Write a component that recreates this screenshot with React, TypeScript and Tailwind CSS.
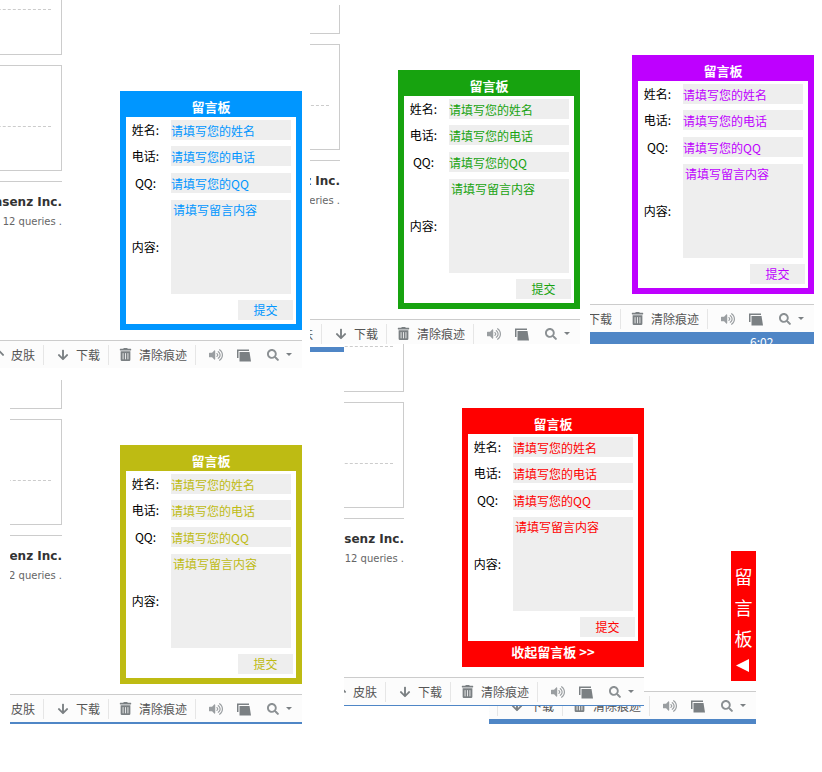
import { FaArrowDown, FaArrowUp, FaSearch, FaTrashAlt, FaVolumeUp } from 'react-icons/fa'

const themes = {
  blue: { bg: 'bg-[#0096ff]', ph: 'placeholder:text-[#0096ff]', text: 'text-[#0096ff]' },
  green: { bg: 'bg-[#17a30f]', ph: 'placeholder:text-[#17a30f]', text: 'text-[#17a30f]' },
  purple: { bg: 'bg-[#be00ff]', ph: 'placeholder:text-[#be00ff]', text: 'text-[#be00ff]' },
  olive: { bg: 'bg-[#bebb13]', ph: 'placeholder:text-[#bebb13]', text: 'text-[#bebb13]' },
  red: { bg: 'bg-[#ff0000]', ph: 'placeholder:text-[#ff0000]', text: 'text-[#ff0000]' },
}

type Theme = (typeof themes)['blue']

function Field({ label, placeholder, theme, className }: { label: string; placeholder: string; theme: Theme; className: string }) {
  return (
    <div className={`flex items-center pl-[4px] ${className}`}>
      <span className="w-[31px] text-center text-[12px] leading-none text-black">{label}</span>
      <input
        readOnly
        placeholder={placeholder}
        className={`ml-[10px] h-[20px] w-[120px] bg-[#eeeeee] p-0 text-[12px] outline-none ${theme.ph}`}
      />
    </div>
  )
}

function MessageCard({ theme, className, collapse }: { theme: Theme; className: string; collapse?: boolean }) {
  return (
    <div className={`absolute z-10 flex w-[182px] flex-col px-[6px] ${theme.bg} ${className}`}>
      <h3 className="flex h-[26px] items-end justify-center pb-[1px] text-[13px] leading-[18px] font-bold text-white">留言板</h3>
      <div className="flex h-[207px] flex-col bg-white pt-[3px]">
        <Field label="姓名:" placeholder="请填写您的姓名" theme={theme} className="" />
        <Field label="电话:" placeholder="请填写您的电话" theme={theme} className="mt-[6px]" />
        <Field label="QQ:" placeholder="请填写您的QQ" theme={theme} className="mt-[7px]" />
        <div className="mt-[7px] flex items-center pl-[4px]">
          <span className="w-[31px] text-center text-[12px] leading-none text-black">内容:</span>
          <textarea
            readOnly
            placeholder="请填写留言内容"
            className={`ml-[10px] h-[94px] w-[120px] resize-none bg-[#eeeeee] px-[2px] py-[1px] text-[12px] leading-[18px] outline-none ${theme.ph}`}
          />
        </div>
        <div className="mt-[6px] flex justify-end pr-[3px]">
          <button className={`h-[20px] w-[55px] bg-[#eeeeee] text-[12px] leading-none ${theme.text}`}>提交</button>
        </div>
      </div>
      {collapse ? (
        <div className="flex h-[26px] items-start justify-center pt-[1px] text-[13px] leading-[20px] font-bold whitespace-pre text-white">收起留言板 {'>>'}</div>
      ) : (
        <div className="h-[6px]" />
      )}
    </div>
  )
}

// bit of the forum page left behind the card in each capture
function PageScrap({ className }: { className: string }) {
  return (
    <div className={`absolute flex flex-col items-end justify-end overflow-hidden bg-white font-['DejaVu_Sans',sans-serif] ${className}`}>
      <div className="flex h-[100px] w-[400px] shrink-0 flex-col items-end justify-end border-r border-b border-[#cccccc] pb-[44px]">
        <div className="mr-[10px] w-[380px] border-t border-dashed border-[#cccccc]" />
      </div>
      <div className="mt-[10px] h-[106px] w-[400px] shrink-0 border border-[#cccccc] pt-[60px]">
        <div className="ml-auto mr-[10px] w-[380px] border-t border-dashed border-[#cccccc]" />
      </div>
      <div className="mt-[10px] h-px w-[400px] shrink-0 bg-[#cccccc]" />
      <div className="mt-[13px] h-[14px] shrink-0 text-[12px] leading-[14px] font-bold whitespace-nowrap text-[#333333]">Comsenz Inc.</div>
      <div className="mt-[6px] h-[14px] shrink-0 text-[10px] leading-[14px] whitespace-nowrap text-[#666666]">second(s), 12 queries .</div>
    </div>
  )
}

function WindowsIcon() {
  return (
    <svg width="15" height="14" viewBox="0 0 15 14" fill="#7b8083" className="shrink-0">
      <path d="M0 1.5 h12 v1.5 H1.5 V10 H0 Z" />
      <path d="M2.5 4 h10 l1.5 9.5 H2.5 Z" />
    </svg>
  )
}

function Sep({ className }: { className: string }) {
  return <span className={`h-[20px] w-px shrink-0 bg-[#e6e6e6] ${className}`} />
}

function Toolbar({ className, rowClass, children }: { className: string; rowClass: string; children?: React.ReactNode }) {
  return (
    <div className={`absolute overflow-hidden border-t border-[#cccccc] bg-[#fcfcfc] ${className}`}>
      <div className={`flex h-[27px] w-max items-center text-[12px] text-[#555555] ${rowClass}`}>
        <FaArrowUp size={12} color="#7b8083" className="shrink-0" />
        <span className="ml-[6px] w-[24px] shrink-0">皮肤</span>
        <Sep className="ml-[8px]" />
        <FaArrowDown size={12} color="#7b8083" className="ml-[13px] shrink-0" />
        <span className="ml-[7px] w-[24px] shrink-0">下载</span>
        <Sep className="ml-[8px]" />
        <FaTrashAlt size={13} color="#7b8083" className="ml-[10px] shrink-0" />
        <span className="ml-[7px] w-[48px] shrink-0">清除痕迹</span>
        <Sep className="ml-[8px]" />
        <FaVolumeUp size={14} color="#9a9ea1" className="ml-[13px] shrink-0" />
        <span className="ml-[14px] shrink-0">
          <WindowsIcon />
        </span>
        <FaSearch size={12} color="#8b9093" className="ml-[15px] shrink-0" />
        <span className="ml-[7px] h-0 w-0 shrink-0 border-x-[3px] border-t-[3px] border-x-transparent border-t-[#7b8083]" />
      </div>
      {children}
    </div>
  )
}

export default function App() {
  return (
    <div className="relative h-[772px] w-[822px] overflow-hidden bg-white font-['Noto_Sans_CJK_SC','Liberation_Sans',sans-serif]">
      <PageScrap className="top-0 left-0 h-[229px] w-[62px]" />
      <PageScrap className="top-[5px] left-[310px] h-[203px] w-[30px]" />
      <PageScrap className="top-[380px] left-[10px] h-[203px] w-[52px]" />
      <PageScrap className="top-[344px] left-[344px] h-[222px] w-[60px]" />

      <Toolbar className="top-[340px] left-0 h-[28px] w-[302px]" rowClass="ml-[-7px]" />
      <Toolbar className="top-[319px] left-[310px] h-[25px] w-[270px]" rowClass="ml-[-39px]" />
      <div className="absolute top-[347px] left-[310px] h-[5px] w-[34px] bg-[#4f86c6]" />
      <Toolbar className="top-[304px] left-[590px] h-[40px] w-[224px]" rowClass="ml-[-85px]">
        <div className="h-[12px] overflow-hidden bg-[#4f86c6] pl-[160px] text-[12px] leading-[20px] text-white">6:02</div>
      </Toolbar>
      <Toolbar className="top-[694px] left-[10px] h-[30px] w-[292px]" rowClass="ml-[-17px]">
        <div className="h-[2px] bg-[#4f86c6]" />
      </Toolbar>
      <Toolbar className="top-[691px] left-[489px] h-[33px] w-[267px]" rowClass="ml-[-42px]">
        <div className="h-[5px] bg-[#4f86c6]" />
      </Toolbar>
      <Toolbar className="top-[677px] left-[344px] h-[29px] w-[300px]" rowClass="ml-[-9px]">
        <div className="h-px bg-[#4f86c6]" />
      </Toolbar>

      <MessageCard theme={themes.blue} className="top-[91px] left-[120px]" />
      <MessageCard theme={themes.green} className="top-[70px] left-[398px]" />
      <MessageCard theme={themes.purple} className="top-[55px] left-[632px]" />
      <MessageCard theme={themes.olive} className="top-[445px] left-[120px]" />
      <MessageCard theme={themes.red} className="top-[408px] left-[462px]" collapse />

      <div className="absolute top-[551px] left-[731px] z-10 flex h-[130px] w-[25px] flex-col items-center bg-[#ff0000] pt-[10px] text-[18px] leading-[31px] text-white">
        <span>留</span>
        <span>言</span>
        <span>板</span>
        <svg width="13" height="13" viewBox="0 0 13 13" fill="white" className="mt-[5px] -ml-[2px]">
          <polygon points="0,6.5 13,0 13,13" />
        </svg>
      </div>
    </div>
  )
}
